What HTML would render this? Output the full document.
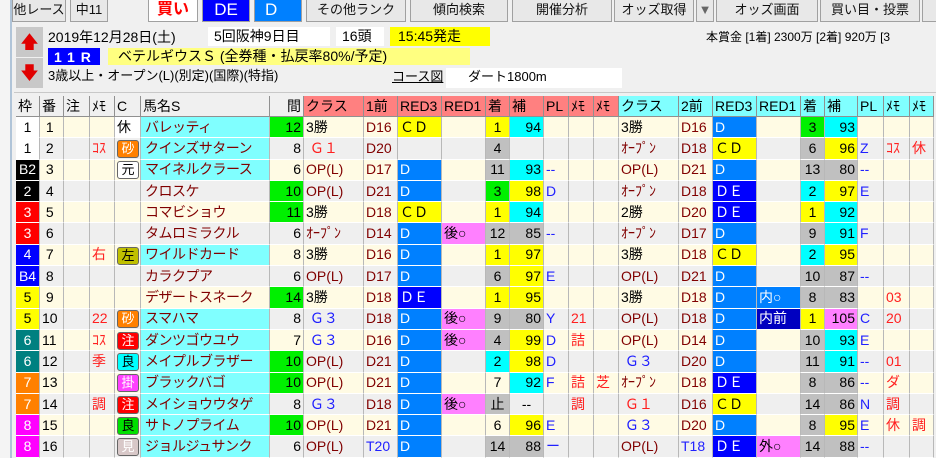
<!DOCTYPE html>
<html><head><meta charset="utf-8"><style>
*{margin:0;padding:0;box-sizing:border-box}
body{width:936px;height:458px;overflow:hidden;background:#f0f0f0;font-family:"Liberation Sans","Noto Sans CJK JP",sans-serif;position:relative;color:#000}
.a{position:absolute}
.btn{position:absolute;top:0;height:22px;background:#e8e8e8;border:1px solid #a0a0a0;border-top:none;font-size:13px;text-align:center;line-height:20px;color:#111;white-space:nowrap;overflow:hidden}
.lb{position:absolute;font-size:14px;line-height:18px;white-space:nowrap}
table{position:absolute;left:16px;top:96px;border-collapse:separate;border-spacing:0;table-layout:fixed;width:918px;font-size:14px}
td{height:21.3px;border-right:1px solid #b8b8b8;border-bottom:1px solid #fff;padding:0 2px;white-space:nowrap;overflow:hidden;line-height:19px}
tr.h td{height:21px;background:#f0f0f0;border-bottom:1px solid #909090;border-right:1px solid #909090;padding:0 2px}
tr.h td.r{background:#ff8080}
tr.h td.c{background:#80ffff}
tr.o td{background:#fffbe4}
tr.e td{background:#efefef}
tr td.w{color:#fff;text-align:center;background:#fff}
tr td.nm{color:#800000;padding-left:4px;letter-spacing:-0.5px}
tr td.cy{background:#80ffff}
tr td.g{background:#00f000}
tr td.y{background:#ffff00}
tr td.gr{background:#c0c0c0}
tr td.lb2{background:#0080ff;color:#fff}
tr td.db{background:#0000ff;color:#fff}
tr td.mg{background:#ff80ff}
tr td.nb{background:#0000c0;color:#fff}
tr td.cc{background:#00ffff}
.dr{color:#800000}.rd{color:#ff2020}.bl{color:#2020ff}
.ct{text-align:center}.rt{text-align:right}
.bx{display:inline-block;width:22px;height:18px;border-radius:3px;border:1px solid #666;text-align:center;line-height:16px;font-size:13px;vertical-align:middle}
</style></head><body>
<div class="a" style="left:0;top:0;width:12px;height:458px;background:#f4f4f4;border-right:2px solid #b0c4d8"></div>
<div class="btn" style="left:12px;width:54px">他レース</div>
<div class="btn" style="left:70px;width:38px">中11</div>
<div class="btn" style="left:148px;width:50px;background:#fff;color:#f00;font-weight:bold;font-size:16px">買い</div>
<div class="btn" style="left:202px;width:48px;background:#0000ff;color:#fff;font-size:17px">DE</div>
<div class="btn" style="left:254px;width:48px;background:#0080ff;color:#fff;font-size:17px;text-align:left;padding-left:10px">D</div>
<div class="btn" style="left:306px;width:100px">その他ランク</div>
<div class="btn" style="left:410px;width:98px">傾向検索</div>
<div class="btn" style="left:512px;width:100px">開催分析</div>
<div class="btn" style="left:614px;width:80px">オッズ取得</div>
<div class="btn" style="left:696px;width:18px;color:#666">▼</div>
<div class="btn" style="left:716px;width:102px">オッズ画面</div>
<div class="btn" style="left:820px;width:100px">買い目・投票</div>
<div class="btn" style="left:922px;width:20px"></div>
<div class="a" style="left:16px;top:27px;width:27px;height:30px;background:#c8c8c8;color:#e00000;text-align:center;font-size:18px;line-height:30px">🡅</div>
<div class="a" style="left:16px;top:58px;width:27px;height:30px;background:#c8c8c8;color:#e00000;text-align:center;font-size:18px;line-height:30px">🡇</div>
<div class="lb" style="left:48px;top:28px">2019年12月28日(土)</div>
<div class="lb" style="left:208px;top:27px;width:122px;height:19px;background:#fff;padding-left:6px">5回阪神9日目</div>
<div class="lb" style="left:336px;top:27px;width:48px;height:19px;background:#fff;padding-left:6px">16頭</div>
<div class="lb" style="left:390px;top:27px;width:100px;height:19px;background:#ffff00;padding-left:8px">15:45発走</div>
<div class="lb" style="left:706px;top:28px;font-size:12px">本賞金 [1着] 2300万 [2着] 920万 [3</div>
<div class="lb" style="left:48px;top:48px;width:52px;height:17px;background:#0000ff;color:#fff;font-weight:bold;letter-spacing:6px;padding-left:6px">11R</div>
<div class="lb" style="left:108px;top:48px;width:362px;height:17px;background:#ffff80;padding-left:10px;line-height:17px">ベテルギウスＳ (全券種・払戻率80%/予定)</div>
<div class="lb" style="left:48px;top:67px;font-size:13px">3歳以上・オープン(L)(別定)(国際)(特指)</div>
<div class="lb" style="left:392px;top:68px;font-size:13px;text-decoration:underline">コース図</div>
<div class="lb" style="left:446px;top:68px;width:176px;height:20px;background:#fff;padding-left:22px;font-size:13px">ダート1800m</div>
<div class="a" style="left:14px;top:92px;width:922px;height:1px;background:#c8c8c8"></div>
<table>
<colgroup><col style="width:24px"><col style="width:24px"><col style="width:26px"><col style="width:25px"><col style="width:26px"><col style="width:129px"><col style="width:34px"><col style="width:60px"><col style="width:34px"><col style="width:44px"><col style="width:44px"><col style="width:24px"><col style="width:34px"><col style="width:25px"><col style="width:25px"><col style="width:25px"><col style="width:60px"><col style="width:34px"><col style="width:44px"><col style="width:44px"><col style="width:24px"><col style="width:33px"><col style="width:26px"><col style="width:26px"><col style="width:24px"></colgroup>
<tr class="h"><td>枠</td><td>番</td><td>注</td><td>ﾒﾓ</td><td>C</td><td>馬名S</td><td class="rt">間</td><td class="r">クラス</td><td class="r">1前</td><td class="r">RED3</td><td class="r">RED1</td><td class="r">着</td><td class="r">補</td><td class="r">PL</td><td class="r">ﾒﾓ</td><td class="r">ﾒﾓ</td><td class="c">クラス</td><td class="c">2前</td><td class="c">RED3</td><td class="c">RED1</td><td class="c">着</td><td class="c">補</td><td class="c">PL</td><td class="c">ﾒﾓ</td><td class="c">ﾒﾓ</td></tr>
<tr class="o"><td class="w" style="color:#000">1</td><td>&nbsp;1</td><td></td><td></td><td style="background:#fff">休</td><td class="nm cy">バレッティ</td><td class="g rt">12</td><td>3勝</td><td class="dr">D16</td><td class="y">ＣＤ</td><td></td><td class="y ct">1</td><td class="cc rt">94</td><td></td><td></td><td></td><td>3勝</td><td class="dr">D16</td><td class="lb2">D</td><td></td><td class="g ct">3</td><td class="cc rt">93</td><td></td><td></td><td></td></tr>
<tr class="e"><td class="w" style="color:#000">1</td><td>&nbsp;2</td><td></td><td class="rd">ｺｽ</td><td><span class="bx" style="background:#ff8000;color:#fff">砂</span></td><td class="nm cy">クインズサターン</td><td class="rt">8</td><td class="rd">&nbsp;Ｇ１</td><td class="dr">D20</td><td></td><td></td><td class="gr ct">4</td><td></td><td></td><td></td><td></td><td class="dr">ｵｰﾌﾟﾝ</td><td class="dr">D18</td><td class="y">ＣＤ</td><td></td><td class="gr ct">6</td><td class="y rt">96</td><td class="bl">Z</td><td class="rd">ｺｽ</td><td class="rd">休</td></tr>
<tr class="o"><td class="w" style="background:#000">B2</td><td>&nbsp;3</td><td></td><td></td><td><span class="bx" style="background:#fff">元</span></td><td class="nm cy">マイネルクラース</td><td class="rt">6</td><td class="dr">OP(L)</td><td class="dr">D17</td><td class="lb2">D</td><td></td><td class="gr ct">11</td><td class="cc rt">93</td><td class="bl">--</td><td></td><td></td><td class="dr">OP(L)</td><td class="dr">D21</td><td class="lb2">D</td><td></td><td class="gr ct">13</td><td class="gr rt">80</td><td class="bl">--</td><td></td><td></td></tr>
<tr class="e"><td class="w" style="background:#000">2</td><td>&nbsp;4</td><td></td><td></td><td></td><td class="nm">クロスケ</td><td class="g rt">10</td><td class="dr">OP(L)</td><td class="dr">D21</td><td class="lb2">D</td><td></td><td class="g ct">3</td><td class="y rt">98</td><td class="bl">D</td><td></td><td></td><td class="dr">ｵｰﾌﾟﾝ</td><td class="dr">D18</td><td class="db">ＤＥ</td><td></td><td class="cc ct">2</td><td class="y rt">97</td><td class="bl">E</td><td></td><td></td></tr>
<tr class="o"><td class="w" style="background:#ff0000">3</td><td>&nbsp;5</td><td></td><td></td><td></td><td class="nm">コマビショウ</td><td class="g rt">11</td><td>3勝</td><td class="dr">D18</td><td class="y">ＣＤ</td><td></td><td class="y ct">1</td><td class="cc rt">94</td><td></td><td></td><td></td><td>2勝</td><td class="dr">D20</td><td class="db">ＤＥ</td><td></td><td class="y ct">1</td><td class="cc rt">92</td><td></td><td></td><td></td></tr>
<tr class="e"><td class="w" style="background:#ff0000">3</td><td>&nbsp;6</td><td></td><td></td><td></td><td class="nm">タムロミラクル</td><td class="rt">6</td><td class="dr">ｵｰﾌﾟﾝ</td><td class="dr">D14</td><td class="lb2">D</td><td class="mg">後○</td><td class="gr ct">12</td><td class="gr rt">85</td><td class="bl">--</td><td></td><td></td><td class="dr">ｵｰﾌﾟﾝ</td><td class="dr">D17</td><td class="lb2">D</td><td></td><td class="gr ct">9</td><td class="cc rt">91</td><td class="bl">F</td><td></td><td></td></tr>
<tr class="o"><td class="w" style="background:#0000ff">4</td><td>&nbsp;7</td><td></td><td class="rd">右</td><td><span class="bx" style="background:#c0c000">左</span></td><td class="nm cy">ワイルドカード</td><td class="rt">8</td><td>3勝</td><td class="dr">D16</td><td class="lb2">D</td><td></td><td class="y ct">1</td><td class="y rt">97</td><td></td><td></td><td></td><td>3勝</td><td class="dr">D18</td><td class="y">ＣＤ</td><td></td><td class="cc ct">2</td><td class="y rt">95</td><td></td><td></td><td></td></tr>
<tr class="e"><td class="w" style="background:#0000ff">B4</td><td>&nbsp;8</td><td></td><td></td><td></td><td class="nm">カラクプア</td><td class="rt">6</td><td class="dr">OP(L)</td><td class="dr">D17</td><td class="lb2">D</td><td></td><td class="gr ct">6</td><td class="y rt">97</td><td class="bl">E</td><td></td><td></td><td class="dr">OP(L)</td><td class="dr">D21</td><td class="lb2">D</td><td></td><td class="gr ct">10</td><td class="gr rt">87</td><td class="bl">--</td><td></td><td></td></tr>
<tr class="o"><td class="w" style="background:#ffff00;color:#000">5</td><td>&nbsp;9</td><td></td><td></td><td></td><td class="nm">デザートスネーク</td><td class="g rt">14</td><td>3勝</td><td class="dr">D18</td><td class="db">ＤＥ</td><td></td><td class="y ct">1</td><td class="y rt">95</td><td></td><td></td><td></td><td>3勝</td><td class="dr">D18</td><td class="lb2">D</td><td class="lb2">内○</td><td class="gr ct">8</td><td class="gr rt">83</td><td></td><td class="rd">03</td><td></td></tr>
<tr class="e"><td class="w" style="background:#ffff00;color:#000">5</td><td>10</td><td></td><td class="rd">22</td><td><span class="bx" style="background:#ff8000;color:#fff">砂</span></td><td class="nm cy">スマハマ</td><td class="rt">8</td><td class="bl">&nbsp;Ｇ３</td><td class="dr">D18</td><td class="lb2">D</td><td class="mg">後○</td><td class="gr ct">9</td><td class="gr rt">80</td><td class="bl">Y</td><td class="rd">21</td><td></td><td class="dr">OP(L)</td><td class="dr">D18</td><td class="lb2">D</td><td class="nb">内前</td><td class="y ct">1</td><td class="mg rt">105</td><td class="bl">C</td><td class="rd">20</td><td></td></tr>
<tr class="o"><td class="w" style="background:#008080">6</td><td>11</td><td></td><td class="rd">ｺｽ</td><td><span class="bx" style="background:#ff0000;color:#fff">注</span></td><td class="nm cy">ダンツゴウユウ</td><td class="rt">7</td><td class="bl">&nbsp;Ｇ３</td><td class="dr">D16</td><td class="lb2">D</td><td class="mg">後○</td><td class="gr ct">4</td><td class="y rt">99</td><td class="bl">D</td><td class="rd">詰</td><td></td><td class="dr">OP(L)</td><td class="dr">D14</td><td class="lb2">D</td><td></td><td class="gr ct">10</td><td class="cc rt">93</td><td class="bl">E</td><td></td><td></td></tr>
<tr class="e"><td class="w" style="background:#008080">6</td><td>12</td><td></td><td class="rd">季</td><td><span class="bx" style="background:#00ffff">良</span></td><td class="nm cy">メイプルブラザー</td><td class="g rt">10</td><td class="dr">OP(L)</td><td class="dr">D21</td><td class="lb2">D</td><td></td><td class="cc ct">2</td><td class="y rt">98</td><td class="bl">D</td><td></td><td></td><td class="bl">&nbsp;Ｇ３</td><td class="dr">D20</td><td class="lb2">D</td><td></td><td class="gr ct">11</td><td class="cc rt">91</td><td class="bl">--</td><td class="rd">01</td><td></td></tr>
<tr class="o"><td class="w" style="background:#ff8000">7</td><td>13</td><td></td><td></td><td><span class="bx" style="background:#ff40ff;color:#fff">掛</span></td><td class="nm cy">ブラックバゴ</td><td class="g rt">10</td><td class="dr">OP(L)</td><td class="dr">D21</td><td class="lb2">D</td><td></td><td class="ct">7</td><td class="cc rt">92</td><td class="bl">F</td><td class="rd">詰</td><td class="rd">芝</td><td class="dr">ｵｰﾌﾟﾝ</td><td class="dr">D18</td><td class="db">ＤＥ</td><td></td><td class="gr ct">8</td><td class="gr rt">86</td><td class="bl">--</td><td class="rd">ダ</td><td></td></tr>
<tr class="e"><td class="w" style="background:#ff8000">7</td><td>14</td><td></td><td class="rd">調</td><td><span class="bx" style="background:#ff0000;color:#fff">注</span></td><td class="nm cy">メイショウウタゲ</td><td class="rt">8</td><td class="bl">&nbsp;Ｇ３</td><td class="dr">D18</td><td class="lb2">D</td><td class="mg">後○</td><td class="gr ct">止</td><td class="ct">--</td><td></td><td class="rd">調</td><td></td><td class="rd">&nbsp;Ｇ１</td><td class="dr">D16</td><td class="y">ＣＤ</td><td></td><td class="gr ct">14</td><td class="gr rt">86</td><td class="bl">N</td><td class="rd">調</td><td></td></tr>
<tr class="o"><td class="w" style="background:#ff00ff">8</td><td>15</td><td></td><td></td><td><span class="bx" style="background:#00e000">良</span></td><td class="nm cy">サトノプライム</td><td class="g rt">10</td><td class="dr">OP(L)</td><td class="dr">D21</td><td class="lb2">D</td><td></td><td class="ct">6</td><td class="y rt">96</td><td class="bl">E</td><td></td><td></td><td class="bl">&nbsp;Ｇ３</td><td class="dr">D20</td><td class="lb2">D</td><td></td><td class="gr ct">8</td><td class="y rt">95</td><td class="bl">E</td><td class="rd">休</td><td class="rd">調</td></tr>
<tr class="e"><td class="w" style="background:#ff00ff">8</td><td>16</td><td></td><td></td><td><span class="bx" style="background:#d8c8c8;color:#fff">見</span></td><td class="nm cy">ジョルジュサンク</td><td class="rt">6</td><td class="dr">OP(L)</td><td class="bl">T20</td><td class="lb2">D</td><td></td><td class="gr ct">14</td><td class="gr rt">88</td><td class="bl">ー</td><td></td><td></td><td class="dr">OP(L)</td><td class="bl">T18</td><td class="db">ＤＥ</td><td class="mg">外○</td><td class="gr ct">14</td><td class="gr rt">88</td><td class="bl">--</td><td></td><td></td></tr>
</table>
</body></html>
